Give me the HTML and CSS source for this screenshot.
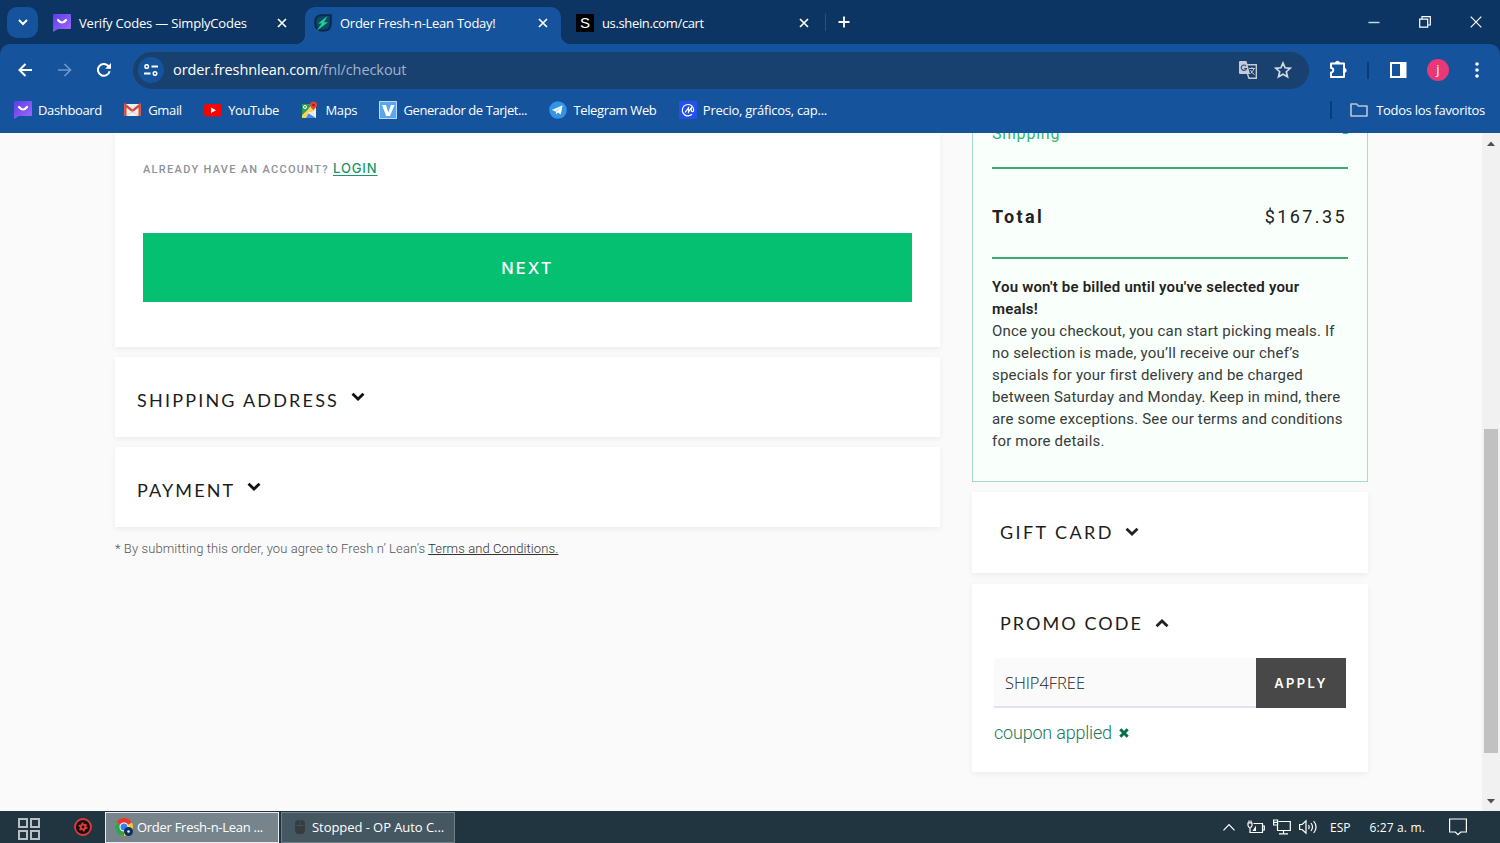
FILE: index.html
```html
<!doctype html>
<html lang="es">
	<head>
		<meta charset="utf-8">
		<title>Order Fresh-n-Lean Today!</title>
		<link rel="stylesheet" href="styles.css">
	</head>
	<body>
		<svg width="0" height="0" class="defs">
			<defs>
				<linearGradient id="violet" x1="0" y1="0" x2="1" y2="1"><stop offset="0" stop-color="#5a3df0"/><stop offset="1" stop-color="#a36bf5"/></linearGradient>
				<symbol id="simply" viewBox="0 0 18 18"><path d="M1 0h16a1 1 0 0 1 1 1v13a1 1 0 0 1-1 1H5l-5 3V1a1 1 0 0 1 1-1z" fill="url(#violet)"/><path d="M5 6q4 5 8 0" fill="none" stroke="#fff" stroke-width="2.2" stroke-linecap="round"/></symbol>
				<symbol id="cross" viewBox="0 0 10 10"><path d="M1 1l8 8M9 1l-8 8" fill="none" stroke="currentColor" stroke-width="1.7"/></symbol>
				<symbol id="chevron" viewBox="0 0 14 9"><path d="M1.500 1.700L7 7l5.500-5.300" fill="none" stroke="currentColor" stroke-width="2.8"/></symbol>
			</defs>
		</svg>

		<div class="tabs">
			<button class="search"><svg width="10" height="7" viewBox="0 0 10 7"><path d="M1 1l4 4 4-4" fill="none" stroke="#fff" stroke-width="2"/></svg></button>
			<div class="tab first">
				<svg width="18" height="18"><use href="#simply"/></svg>
				<span class="t1">Verify Codes — SimplyCodes</span>
				<svg class="close" width="10" height="10"><use href="#cross"/></svg>
			</div>
			<div class="tab active">
				<svg width="18" height="18" viewBox="0 0 18 18"><path d="M1.200 8Q1.200 1.200 8 1.200h8.800V9q0 7.800-7.800 7.800T1.200 9z" fill="#0f4868" stroke="#082b4c" stroke-width="2"/><path d="M13.500 2L4 9.500h3.700L2.500 17 14 8.300H10z" fill="#1fcf8d"/></svg>
				<span class="t2">Order Fresh-n-Lean Today!</span>
				<svg class="close" width="10" height="10"><use href="#cross"/></svg>
			</div>
			<div class="tab last">
				<span class="shein">S</span>
				<span class="t3">us.shein.com/cart</span>
				<svg class="close" width="10" height="10"><use href="#cross"/></svg>
			</div>
			<i class="tabline"></i>
			<svg class="plus" width="12" height="12" viewBox="0 0 12 12"><path d="M6 .5v11M.5 6h11" stroke="#fff" stroke-width="1.800"/></svg>
			<div class="window">
				<svg width="12" height="12" viewBox="0 0 12 12"><path d="M.5 6.500h11" stroke="#c9d5e3" stroke-width="1.500"/></svg>
				<svg width="12" height="12" viewBox="0 0 12 12"><path d="M.7 3.200h8v8h-8zM3 3V.7h8.300V9H9" fill="none" stroke="#fff" stroke-width="1.200"/></svg>
				<svg width="12" height="12" viewBox="0 0 12 12"><path d="M.7.700l10.600 10.600M11.300.700L.700 11.300" stroke="#fff" stroke-width="1.200"/></svg>
			</div>
		</div>

		<div class="toolbar">
			<svg class="nav" width="14" height="14" viewBox="0 0 14 14"><path d="M14 7H1.500M7.500 1l-6 6 6 6" fill="none" stroke="#fff" stroke-width="2"/></svg>
			<svg class="nav" width="14" height="14" viewBox="0 0 14 14"><path d="M0 7h12.500M6.500 1l6 6-6 6" fill="none" stroke="#6d98cd" stroke-width="1.700"/></svg>
			<svg class="nav" width="14" height="14" viewBox="0 0 14 14"><path d="M12.600 8.200A5.900 5.900 0 1 1 11.300 3L13 4.800" fill="none" stroke="#fff" stroke-width="2"/><path d="M14 0v5.800H8.200z" fill="#fff"/></svg>
			<div class="address">
				<span class="site"><svg width="14" height="12" viewBox="0 0 14 12"><path d="M7.500 2.500H14M0 9.500h6.500" stroke="#fff" stroke-width="2"/><circle cx="2.700" cy="2.500" r="1.800" fill="none" stroke="#fff" stroke-width="1.500"/><circle cx="11" cy="9.500" r="1.800" fill="none" stroke="#fff" stroke-width="1.500"/></svg></span>
				<span class="url">order.freshnlean.com<em>/fnl/checkout</em></span>
				<svg class="translate" width="18" height="18" viewBox="0 0 18 18"><path d="M1 0h6.500l3.500 13H1a1 1 0 0 1-1-1V1a1 1 0 0 1 1-1z" fill="#c5cbd5"/><path d="M8 3.700h9.300v13.600H10L8.500 13" fill="none" stroke="#c5cbd5" stroke-width="1.400"/><path d="M7 5A2.700 2.700 0 1 0 7.500 7.500H5" fill="none" stroke="#304f7c" stroke-width="1.200"/><path d="M10 7.500h6M13 6v1.500M15 7.500q-1 3.500-3.500 5M11.500 9q1 3 4 4.500" fill="none" stroke="#c5cbd5"/></svg>
				<svg width="18" height="18" viewBox="0 0 18 18"><path d="M9 2l2.100 4.800 5.100.500-3.900 3.400 1.200 5.100L9 13.200l-4.500 2.600 1.200-5.100-3.900-3.400 5.100-.500z" fill="none" stroke="#d3d9e2" stroke-width="1.700"/></svg>
			</div>
			<svg class="puzzle" width="19" height="19" viewBox="0 0 19 19"><path d="M2 3.500H15V17H2v-4.500a2.200 2.200 0 0 0 0-4.500z" fill="none" stroke="#fff" stroke-width="2" stroke-linejoin="round"/><path d="M6.300 3.500a2.200 2.200 0 0 1 4.400 0zM15 8.200a2.200 2.200 0 0 1 0 4.400z" fill="#fff" stroke="#fff"/></svg>
			<i class="barline"></i>
			<svg class="panel" width="17" height="16" viewBox="0 0 17 16"><rect x="1" y="1" width="14.500" height="14" fill="none" stroke="#fff" stroke-width="2"/><path d="M10 1h6v14h-6z" fill="#fff"/></svg>
			<span class="avatar">j</span>
			<svg class="dots" width="4" height="16" viewBox="0 0 4 16"><g fill="#fff"><circle cx="2" cy="2" r="1.800"/><circle cx="2" cy="8" r="1.800"/><circle cx="2" cy="14" r="1.800"/></g></svg>
		</div>

		<div class="bookmarks">
			<a><svg width="18" height="18"><use href="#simply"/></svg><span class="b1">Dashboard</span></a>
			<a><svg width="18" height="18" viewBox="0 0 18 18"><path d="M0 3h17v12H0z" fill="#f1eeee"/><path d="M1.300 15V4l7.200 6 7.200-6v11" fill="none" stroke="#d64a3d" stroke-width="2.400"/><path d="M3 14.500L8.500 10l5.500 4.500" fill="none" stroke="#d5d0d0"/></svg><span class="b2">Gmail</span></a>
			<a><svg width="18" height="18" viewBox="0 0 18 18"><rect y="3" width="18" height="12.500" rx="3" fill="#f00"/><path d="M7 6.500v5.500l5-2.750z" fill="#fff"/></svg><span class="b3">YouTube</span></a>
			<a><svg width="18" height="18" viewBox="0 0 18 18"><path d="M1 3h14v14H1z" fill="#eee"/><path d="M1 3h10L6 10l-5 5z" fill="#2b9f52"/><path d="M1 14L12 4l3 3L5 17H1z" fill="#f8d34c"/><path d="M5 17l4-7 6 7z" fill="#4488f0"/><path d="M7 12l2-2 6 6v1z" fill="#eee"/><path d="M1 3h9L5.500 9 1 14z" fill="#2b9f52"/><path d="M12.500 10C12 7 9 7 9 4a3.500 3.500 0 0 1 7 0c0 3-3 3-3.500 6z" fill="#e34436"/><circle cx="12.500" cy="4" r="1.200" fill="#8e1b17"/><circle cx="4" cy="6" r="1.500" fill="none" stroke="#fff"/></svg><span class="b4">Maps</span></a>
			<a><svg width="18" height="18" viewBox="0 0 18 18"><path d="M0 0h18v18H0z" fill="#5ba7ee"/><path d="M.5.500h17v17H.5z" fill="none" stroke="#b4d9fb"/><path d="M3 4h4l2.300 7.500L12 4h3.500l-4.500 11H7.200z" fill="#fff"/></svg><span class="b5">Generador de Tarjet...</span></a>
			<a><svg width="18" height="18" viewBox="0 0 18 18"><circle cx="9" cy="9" r="8.800" fill="#3294e8"/><path d="M2.800 9l10.800-4.700-1.800 9.300-3-2-1.700 1.800-.4-3z" fill="#fff"/><path d="M7 10l4.500-3.500-3.700 4.300z" fill="#8dc3f3"/></svg><span class="b6">Telegram Web</span></a>
			<a><svg width="18" height="18" viewBox="0 0 18 18"><rect width="18" height="18" rx="1" fill="#2451ee"/><path d="M13 13.300A5.700 5.700 0 1 1 14.700 9c0 2.200-2.400 2.200-2.400 0V6.800L9.500 11V6.800L6 11.500" fill="none" stroke="#fff" stroke-width="1.200"/></svg><span class="b7">Precio, gráficos, cap...</span></a>
			<div class="all">
				<svg width="18" height="14" viewBox="0 0 18 14"><path d="M1 1h5.500l2 2H17v10H1z" fill="none" stroke="#bec5cf" stroke-width="1.600" stroke-linejoin="round"/></svg>
				<span class="b8">Todos los favoritos</span>
			</div>
		</div>

		<div class="view">
			<main>
				<section class="card account">
					<p>ALREADY HAVE AN ACCOUNT? <a>LOGIN</a></p>
					<button>NEXT</button>
				</section>
				<section class="card step"><h2 class="h-ship">SHIPPING ADDRESS</h2><svg width="14" height="9"><use href="#chevron"/></svg></section>
				<section class="card step"><h2 class="h-pay">PAYMENT</h2><svg width="14" height="9"><use href="#chevron"/></svg></section>
				<p class="agree">* By submitting this order, you agree to Fresh n’ Lean’s <a>Terms and Conditions.</a></p>
			</main>
			<aside>
				<section class="summary">
					<div class="shipping"><span>Shipping</span><span class="dash">-</span></div>
					<div class="total"><b>Total</b><span>$167.35</span></div>
					<strong>You won't be billed until you've selected your<br>meals!</strong>
					<p>
						Once you checkout, you can start picking meals. If<br>
						no selection is made, you’ll receive our chef’s<br>
						specials for your first delivery and be charged<br>
						between Saturday and Monday. Keep in mind, there<br>
						are some exceptions. See our terms and conditions<br>
						for more details.
					</p>
				</section>
				<section class="card gift"><h2 class="h-gift">GIFT CARD</h2><svg width="14" height="9"><use href="#chevron"/></svg></section>
				<section class="card promo">
					<div class="title"><h2 class="h-promo">PROMO CODE</h2><svg class="up" width="14" height="9"><use href="#chevron"/></svg></div>
					<div class="code"><span class="input">SHIP4FREE</span><button>APPLY</button></div>
					<div class="applied"><span>coupon applied</span><svg width="10" height="10" viewBox="0 0 10 10"><path d="M1.300 1.300l7.400 7.400M8.700 1.300L1.300 8.700" stroke="#056e4b" stroke-width="3"/></svg></div>
				</section>
			</aside>
			<div class="scroll">
				<svg width="8" height="5" viewBox="0 0 8 5"><path d="M0 5l4-4.500L8 5z" fill="#505050"/></svg>
				<i></i>
				<svg width="8" height="5" viewBox="0 0 8 5"><path d="M0 0l4 4.500L8 0z" fill="#505050"/></svg>
			</div>
		</div>

		<div class="taskbar">
			<svg class="grid" width="22" height="22" viewBox="0 0 22 22"><path d="M1 1h8v8H1zM13 1h8v8h-8zM1 13h8v8H1zM13 13h8v8h-8z" fill="none" stroke="#b9bfc2" stroke-width="2"/></svg>
			<svg class="red" width="18" height="18" viewBox="0 0 18 18"><circle cx="9" cy="9" r="8" fill="#170f12" stroke="#e33a3a" stroke-width="1.800"/><circle cx="9" cy="9" r="2.300" fill="none" stroke="#e33a3a" stroke-width="1.800"/><circle cx="9" cy="9" r="3.800" fill="none" stroke="#e33a3a" stroke-width="1.500" stroke-dasharray="2 1.980"/></svg>
			<div class="task on">
				<svg width="18" height="18" viewBox="0 0 18 18"><circle cx="9" cy="9" r="9" fill="#f9c933"/><path d="M9 9L1.200 4.500a9 9 0 0 1 15.600 0z" fill="#e5392e"/><path d="M9 9l0 9A9 9 0 0 1 1.200 4.500z" fill="#2da44f"/><circle cx="9" cy="9" r="4.500" fill="#fff"/><circle cx="9" cy="9" r="3.500" fill="#3b7ded"/><circle cx="13.500" cy="13.500" r="4.500" fill="#0d3260"/><circle cx="13.500" cy="13.500" r="1.200" fill="#fff"/></svg>
				<span class="k1">Order Fresh-n-Lean ...</span>
			</div>
			<div class="task">
				<svg width="12" height="16" viewBox="0 0 12 16"><rect x="1" y="1" width="10" height="14" rx="4" fill="#353c40"/><path d="M1 6.500h10M6 1v5.500" stroke="#454f55"/></svg>
				<span class="k2">Stopped - OP Auto C...</span>
			</div>
			<div class="tray">
				<svg width="12" height="8" viewBox="0 0 12 8"><path d="M.5 7.300L6 1.500l5.500 5.800" fill="none" stroke="#fff" stroke-width="1.200"/></svg>
				<svg class="battery" width="18" height="14" viewBox="0 0 18 14"><path d="M6.500 3.500h9v9H5.500M15.500 6h1.800v4h-1.800M1 3h4v2.500q-.3 2-2 2t-2-2zM2 3V.500M4 3V.500M3 7.500v5h3" fill="none" stroke="#fff" stroke-width="1.200"/><path d="M9 5.500V11H5.500z" fill="#fff"/></svg>
				<svg class="net" width="18" height="16" viewBox="0 0 18 16"><path d="M5.500 2.500h11.800v9H4.500V6.500M.6 1h4v5h-4zM.6 3.300h4M10.500 11.500v3M6 14.800h9" fill="none" stroke="#fff" stroke-width="1.200"/></svg>
				<svg class="sound" width="19" height="16" viewBox="0 0 19 16"><path d="M.6 5.500h2.500L7 1.800v12.400l-3.900-3.700H.6zM9.500 6q1.300 2 0 4M12 4q3 4 0 8M14.700 2q4.700 6 0 12" fill="none" stroke="#fff" stroke-width="1.200"/></svg>
				<span class="lang">ESP</span>
				<span class="time">6:27 a. m.</span>
				<svg class="note" width="18" height="18" viewBox="0 0 18 18"><path d="M.6 1h16.800v13h-5.700L9 16.700 6.300 14H.6z" fill="none" stroke="#fff" stroke-width="1.200"/></svg>
			</div>
		</div>
	</body>
</html>
```
FILE: styles.css
```css
* { box-sizing: border-box; }
body { margin: 0; width: 1500px; height: 843px; overflow: hidden; display: flex; flex-direction: column; background: #fafafa; font-family: "Open Sans", "Noto Sans", sans-serif; font-size: 13px; color: #fff; }
.defs { position: absolute; }
svg { flex: none; display: block; }
span { white-space: nowrap; }
button { border: 0; padding: 0; color: #fff; }

/* tab strip, runs on behind the rounded corners of the toolbar */
.tabs { height: 54px; margin-bottom: -10px; padding: 0 0 10px 7px; flex: none; display: flex; align-items: center; background: #0c3563; }
.search { width: 31px; height: 31px; border-radius: 10px; background: #15549c; display: flex; align-items: center; justify-content: center; }
.tab { height: 37px; margin-top: 7px; padding-bottom: 6px; display: flex; align-items: center; }
.tab .close { margin-left: auto; }
.first { width: 267px; padding-left: 15px; padding-right: 18px; gap: 8px; }
.active { width: 256px; padding-left: 9px; padding-right: 13px; gap: 8px; background: #15549c; border-radius: 10px 10px 0 0; position: relative; }
.active:before, .active:after { content: ""; position: absolute; bottom: 0; width: 10px; height: 10px; }
.active:before { left: -10px; background: radial-gradient(circle at 0 0, #0c3563 10px, #15549c 10.5px); }
.active:after { right: -10px; background: radial-gradient(circle at 100% 0, #0c3563 10px, #15549c 10.5px); }
.last { width: 264px; padding-left: 15px; padding-right: 16px; gap: 8px; }
.shein { width: 18px; height: 18px; background: #000; text-align: center; font: 15px/18px "Liberation Sans", sans-serif; }
.tabline { width: 1px; height: 17px; background: #1d5594; }
.plus { margin-left: 12px; }
.window { margin-left: auto; display: flex; gap: 39px; padding-right: 18px; }
.t1 { letter-spacing: -.19px; }
.t2 { letter-spacing: -.26px; }
.t3 { letter-spacing: -.36px; }

/* toolbar */
.toolbar { height: 52px; flex: none; display: flex; align-items: center; background: #15549c; border-radius: 10px 10px 0 0; padding-left: 18px; position: relative; }
.nav { margin-right: 25.5px; }
.address { width: 1176px; height: 37px; border-radius: 19px; background: #194170; display: flex; align-items: center; padding: 0 17px 0 5px; margin-left: -3.5px; }
.site { width: 26px; height: 26px; border-radius: 50%; background: #15549c; display: flex; align-items: center; justify-content: center; margin-right: 9px; }
.url { font-size: 14.5px; letter-spacing: -.08px; margin-top: -1px; }
.url em { font-style: normal; color: #9eb3cf; }
.translate { margin-left: auto; margin-right: 17px; }
.puzzle { margin-left: 20px; margin-top: -2px; }
.barline { width: 2px; height: 17px; margin-left: 19px; background: #0c3c75; }
.panel { margin-left: 21px; }
.avatar { width: 22px; height: 22px; border-radius: 50%; background: #ea3778; text-align: center; line-height: 21px; margin-left: 20px; }
.dots { margin-left: 26px; }

/* bookmarks */
.bookmarks { height: 37px; flex: none; display: flex; align-items: center; background: #15549c; padding: 0 15px 9px 14px; gap: 22.4px; }
.bookmarks a { display: flex; align-items: center; gap: 6px; }
.all { margin-left: auto; display: flex; align-items: center; gap: 8px; border-left: 2px solid #0c3c75; padding-left: 18px; }
.bookmarks span { letter-spacing: -.36px; }
.bookmarks .b5 { letter-spacing: -.42px; }
.bookmarks .b7 { letter-spacing: -.26px; }
.bookmarks .b8 { letter-spacing: -.28px; }

/* page */
.view { height: 678px; flex: none; overflow: hidden; display: flex; color: #222; font-family: Roboto, sans-serif; }
main { width: 825px; margin-left: 115px; }
.card { background: #fff; box-shadow: 0 2px 6px rgba(0,0,0,.06); }
h2 { margin: 0; font: 400 18px Lato, sans-serif; white-space: nowrap; color: #1c1c1c; }
.h-ship { letter-spacing: 2.2px; }
.h-pay { letter-spacing: 2.1px; }
.h-gift { letter-spacing: 2.4px; }
.h-promo { letter-spacing: 2.05px; }
.account { height: 214px; padding: 27px 28px 0; }
.account p { margin: 0; height: 73px; font-size: 11px; font-weight: 500; letter-spacing: 1.3px; line-height: 20px; color: #8d9299; }
.account a { color: #16966a; font: 500 13px Inter, sans-serif; letter-spacing: .9px; text-decoration: underline; text-underline-offset: 2px; }
.account button { display: block; width: 769px; height: 69px; background: #06c072; font: 500 16.5px Inter, sans-serif; letter-spacing: 2.1px; }
.step { height: 80px; margin-top: 10px; padding: 6px 0 0 22px; display: flex; align-items: center; gap: 11.5px; color: #111; }
.step svg { margin-top: -7px; }
.agree { margin: 12px 0 0; font-size: 13px; font-weight: 300; line-height: 19px; letter-spacing: .095px; color: #555; }
.agree a { color: #333; text-decoration: underline; }
aside { width: 396px; margin-left: 32px; }
.summary { height: 349px; border: 1px solid #a6dcc5; border-top: 0; background: #f9fffb; padding: 0 19px; }
.shipping { height: 36px; display: flex; justify-content: space-between; border-bottom: 2px solid #3eaa73; color: #32b574; font-size: 16px; line-height: 20px; }
.shipping span { margin-top: -9px; letter-spacing: .8px; }
.shipping .dash { font-size: 20px; margin-top: -11px; letter-spacing: 0; }
.total { height: 90px; display: flex; align-items: center; justify-content: space-between; border-bottom: 2px solid #3eaa73; padding-top: 7px; font-size: 18px; letter-spacing: 2.4px; }
.total span { margin-right: 1px; }
.summary strong { display: block; margin-top: 17px; font-size: 15px; line-height: 22px; font-weight: 600; letter-spacing: .2px; white-space: nowrap; }
.summary p { margin: 0; font-size: 15px; line-height: 22px; color: #373b39; letter-spacing: .19px; white-space: nowrap; }
.gift { height: 81px; margin-top: 10px; padding: 0 0 2px 28px; display: flex; align-items: center; gap: 11px; }
.promo { height: 188px; margin-top: 11px; padding: 28px 22px 0; }
.title { display: flex; align-items: center; gap: 12px; height: 22px; padding-left: 6px; }
.up { transform: scaleY(-1); }
.code { display: flex; height: 50px; margin-top: 24px; }
.input { flex: 1; background: #fafafa; border-bottom: 2px solid #e2e0f3; padding-left: 11px; font: 300 16.5px/50px "Open Sans", sans-serif; letter-spacing: -.05px; }
.code button { width: 90px; background: #484848; font: 600 13px Inter, sans-serif; letter-spacing: 2.3px; }
.applied { display: flex; align-items: center; gap: 7px; margin-top: 14px; font-size: 18px; font-weight: 300; line-height: 22px; letter-spacing: -.2px; color: #21785a; }
.scroll { width: 18px; margin-left: auto; background: #f1f1f1; display: flex; flex-direction: column; align-items: center; padding: 8px 0 7px; }
.scroll i { width: 14px; height: 324px; background: #c1c1c1; margin: 283px 0 auto; }

/* taskbar */
.taskbar { height: 32px; flex: none; display: flex; align-items: center; background: #213541; padding-left: 18px; }
.grid { margin-top: 3px; }
.red { margin-left: 34px; margin-right: 13px; }
.task { width: 174px; height: 31px; margin-top: 1px; padding: 0 0 2px 12px; display: flex; align-items: center; gap: 6px; background: #455761; border: 1px solid #71818a; }
.on { margin-right: 2px; padding-left: 9px; gap: 4px; background: #77848b; border: 1px solid #e8ebed; }
.k1 { letter-spacing: -.28px; }
.k2 { letter-spacing: -.06px; }
.tray { margin-left: auto; display: flex; align-items: center; padding-right: 33px; }
.battery { margin-left: 12px; }
.net { margin-left: 8px; }
.sound { margin-left: 8px; }
.lang { margin-left: 12px; font-size: 12px; letter-spacing: 0; }
.time { margin-left: 19px; font-size: 12px; letter-spacing: .15px; }
.note { margin-left: 24px; }
```
